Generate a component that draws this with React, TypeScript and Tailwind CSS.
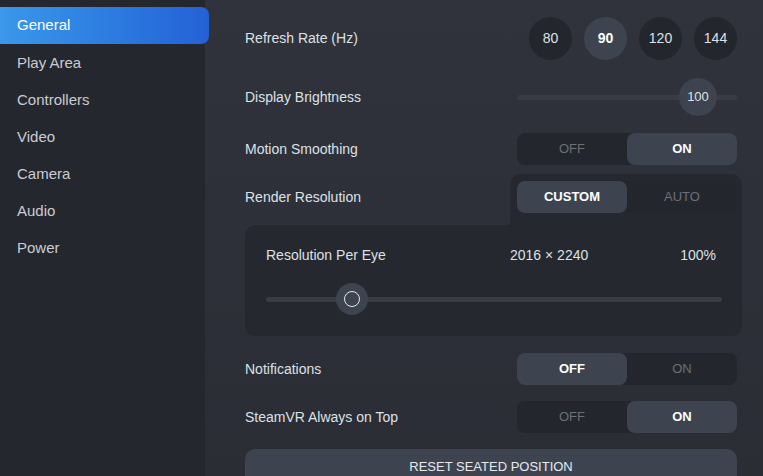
import { useState } from "react";

const menu = ["General", "Play Area", "Controllers", "Video", "Camera", "Audio", "Power"];
const rates = [80, 90, 120, 144];

interface ToggleProps {
  left: string;
  right: string;
  value: 0 | 1;
  onChange: (v: 0 | 1) => void;
}

const Toggle = ({ left, right, value, onChange }: ToggleProps) => (
  <div className="flex w-[220px] h-[32px] rounded-[8px] bg-[#23262c]">
    {[left, right].map((label, i) => (
      <button
        key={label}
        onClick={() => onChange(i as 0 | 1)}
        className={
          "flex-1 rounded-[8px] text-[13px] uppercase " +
          (value === i ? "bg-[#3d4450] text-white font-semibold" : "text-[#6b7079]")
        }
      >
        {label}
      </button>
    ))}
  </div>
);

const App = () => {
  const [active, setActive] = useState("General");
  const [rate, setRate] = useState(90);
  const [smoothing, setSmoothing] = useState<0 | 1>(1);
  const [renderMode, setRenderMode] = useState<0 | 1>(0);
  const [notifications, setNotifications] = useState<0 | 1>(0);
  const [onTop, setOnTop] = useState<0 | 1>(1);

  return (
    <div className="flex w-[763px] h-[476px] overflow-hidden bg-[#2c2f37] font-['Liberation_Sans',Arial,sans-serif] text-[14px] text-[#dde1e6]">
      {/* sidebar */}
      <nav className="w-[205px] shrink-0 bg-[#25272e] pt-[7px]">
        {menu.map((item) => (
          <button
            key={item}
            onClick={() => setActive(item)}
            className={
              "relative z-10 flex items-center h-[37px] pl-[17px] text-[15px] text-left " +
              (active === item
                ? "w-[209px] h-[36px] mb-px rounded-r-[8px] bg-gradient-to-r from-[#3b98ea] to-[#2461d6] text-white font-medium"
                : "w-[205px] text-[#c9cdd3]")
            }
          >
            {item}
          </button>
        ))}
      </nav>

      {/* settings */}
      <main className="flex-1 pl-[40px] pr-[26px] bg-gradient-to-b from-[#30333c] to-[#2a2d34]">
        <div className="flex items-center justify-between mt-[17px] h-[43px]">
          <span>Refresh Rate (Hz)</span>
          <div className="flex gap-[12px]">
            {rates.map((r) => (
              <button
                key={r}
                onClick={() => setRate(r)}
                className={
                  "w-[43px] h-[43px] rounded-full text-[14px] " +
                  (rate === r ? "bg-[#3d4450] text-white font-bold" : "bg-[#23262d] text-[#dde1e6]")
                }
              >
                {r}
              </button>
            ))}
          </div>
        </div>

        <div className="flex items-center justify-between mt-[18px] h-[38px]">
          <span>Display Brightness</span>
          <div className="relative w-[220px] h-[38px] flex items-center">
            <div className="w-full h-[5px] rounded-full bg-[#383c45]" />
            <div className="absolute left-[162px] top-0 w-[38px] h-[38px] rounded-full bg-[#3d4450] flex items-center justify-center text-[13px]">
              100
            </div>
          </div>
        </div>

        <div className="flex items-center justify-between mt-[17px]">
          <span>Motion Smoothing</span>
          <Toggle left="Off" right="On" value={smoothing} onChange={setSmoothing} />
        </div>

        <div className="flex items-start justify-between mt-[9px] -mr-[5px]">
          <span className="mt-[13px]">Render Resolution</span>
          <div className="w-[232px] pl-[7px] pr-[5px] pt-[7px] pb-[12px] rounded-t-[10px] bg-[#25282e]">
            <Toggle left="Custom" right="Auto" value={renderMode} onChange={setRenderMode} />
          </div>
        </div>
        <div className="-mr-[5px] h-[111px] rounded-[10px] rounded-tr-none bg-[#25282e] pl-[21px] pr-[20px] pt-[20px]">
          <div className="flex items-center h-[20px]">
            <span className="w-[244px]">Resolution Per Eye</span>
            <span className="flex-1">2016 × 2240</span>
            <span className="mr-[6px]">100%</span>
          </div>
          <div className="relative mt-[18px] h-[32px] flex items-center">
            <div className="w-full h-[5px] rounded-full bg-[#383c45]" />
            <div className="absolute left-[70px] top-0 w-[32px] h-[32px] rounded-full bg-[#3d4450] flex items-center justify-center">
              <div className="w-[16px] h-[16px] rounded-full border-[1.5px] border-[#e4e7eb]" />
            </div>
          </div>
        </div>

        <div className="flex items-center justify-between mt-[17px]">
          <span>Notifications</span>
          <Toggle left="Off" right="On" value={notifications} onChange={setNotifications} />
        </div>

        <div className="flex items-center justify-between mt-[16px]">
          <span>SteamVR Always on Top</span>
          <Toggle left="Off" right="On" value={onTop} onChange={setOnTop} />
        </div>

        <button className="mt-[16px] w-full h-[34px] rounded-t-[10px] bg-[#3d4450] text-[13px] text-[#e6e9ed] pt-[2px]">
          RESET SEATED POSITION
        </button>
      </main>
    </div>
  );
};

export default App;
